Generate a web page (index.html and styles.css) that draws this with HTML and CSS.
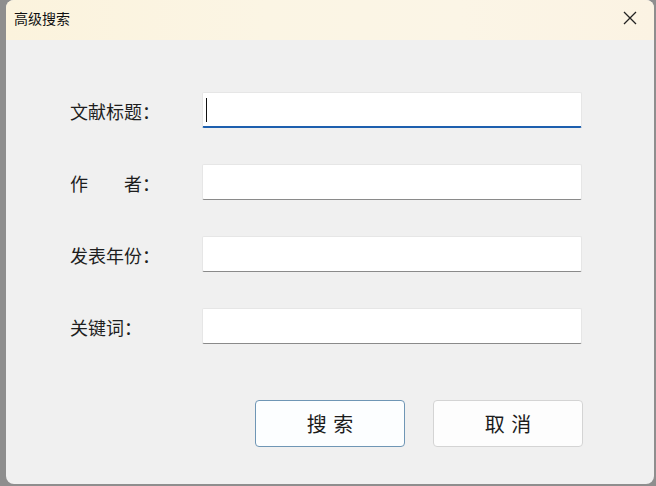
FILE: index.html
```html
<!DOCTYPE html>
<html lang="zh-CN">
<head>
<meta charset="utf-8">
<title>高级搜索</title>
<link rel="stylesheet" href="styles.css">
</head>
<body>
<div class="window">
  <div class="titlebar">
    <span class="title">高级搜索</span>
    <span class="close" aria-label="关闭">
      <svg width="14" height="14" viewBox="0 0 14 14"><path d="M1 1 L13 13 M13 1 L1 13" stroke="#222" stroke-width="1.3" fill="none"/></svg>
    </span>
  </div>
  <div class="content">
    <div class="form">
      <label class="label">文献标题：</label>
      <div class="field focused"><span class="caret"></span></div>
      <label class="label">作　　者：</label>
      <div class="field"></div>
      <label class="label">发表年份：</label>
      <div class="field"></div>
      <label class="label">关键词：</label>
      <div class="field"></div>
    </div>
    <div class="buttons">
      <button class="btn primary">搜 索</button>
      <button class="btn">取 消</button>
    </div>
  </div>
</div>
</body>
</html>
```
FILE: styles.css
```css
html, body {
  margin: 0;
  padding: 0;
  width: 656px;
  height: 486px;
  overflow: hidden;
  background: #8e8e8e;
  font-family: "Noto Sans CJK SC", "Noto Sans", sans-serif;
  color: #1b1b1b;
}
.window {
  margin-left: 6px;
  width: 648px;
  height: 484px;
  border-radius: 8px;
  background: #f0f0f0;
  overflow: hidden;
  display: flex;
  flex-direction: column;
}
.titlebar {
  height: 40px;
  flex: none;
  display: flex;
  align-items: center;
  justify-content: space-between;
  padding: 0 17px 0 8px;
  background: linear-gradient(90deg, #fbf3dd 0%, #fbf5e4 40%, #fbf5e6 70%, #fbf3e3 100%);
}
.title {
  font-size: 14px;
  line-height: 1;
  margin-top: -5px;
  color: #111;
}
.close {
  display: flex;
  margin-top: -4px;
}
.content {
  flex: 1;
  padding: 52px 0 0 64px;
}
.form {
  display: grid;
  grid-template-columns: 132px 380px;
  grid-auto-rows: 36px;
  row-gap: 36px;
}
.label {
  font-size: 18px;
  line-height: 36px;
  padding-top: 1px;
  color: #1e1e1e;
}
.field {
  background: #fff;
  border: 1px solid #e6e6e6;
  border-bottom: 1px solid #8a8a8a;
  border-radius: 2px;
  display: flex;
  align-items: center;
  padding-left: 3px;
}
.field.focused {
  border-bottom: 2px solid #1d5fae;
}
.caret {
  width: 1px;
  height: 24px;
  background: #111;
}
.buttons {
  display: flex;
  gap: 28px;
  margin: 56px 0 0 185px;
}
.btn {
  width: 150px;
  height: 47px;
  background: #fdfdfd;
  border: 1px solid #d4d4d4;
  border-radius: 4px;
  font-family: "Noto Sans CJK SC", "Noto Sans", sans-serif;
  font-size: 20px;
  letter-spacing: 1px;
  color: #1b1b1b;
  padding: 0 0 0 1px;
}
.btn.primary {
  border-color: #6f96b5;
  background: #fcfeff;
}
```
